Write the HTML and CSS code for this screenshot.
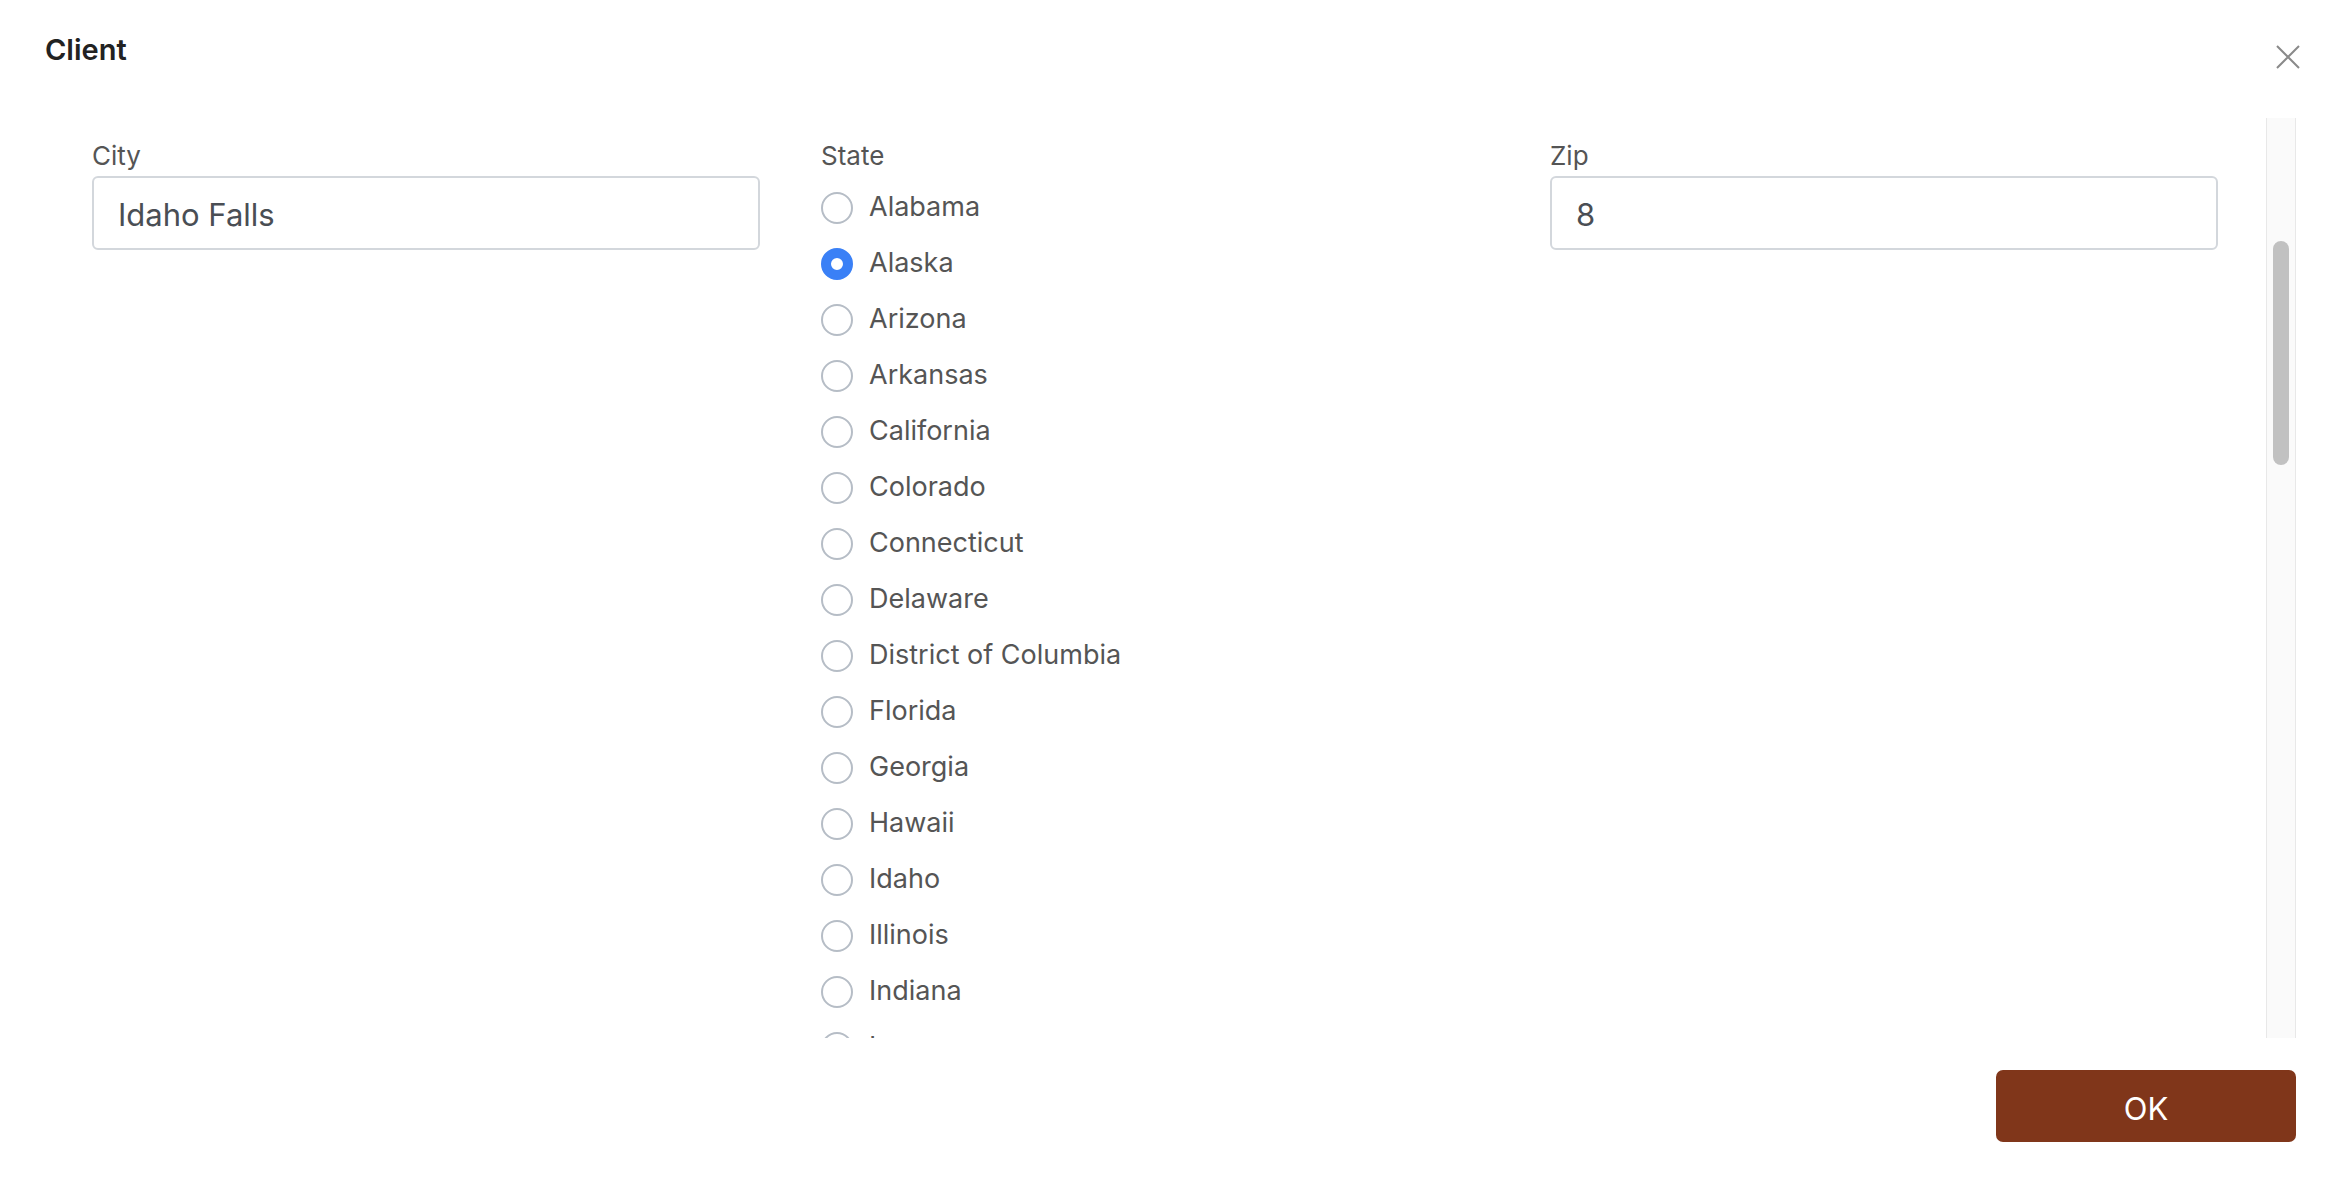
FILE: index.html
```html
<!DOCTYPE html>
<html lang="en">
<head>
<meta charset="utf-8">
<title>Client</title>
<link rel="stylesheet" href="styles.css">
</head>
<body>
<div class="dialog">
  <header class="header">
    <h1 class="title">Client</h1>
    <button class="close" aria-label="Close">
      <svg width="24" height="24" viewBox="0 0 24 24"><path d="M1 1 L23 23 M23 1 L1 23" stroke="#8a8a8a" stroke-width="2" fill="none"/></svg>
    </button>
  </header>
  <div class="body">
    <div class="scroll">
      <div class="grid">
        <div class="field">
          <label class="label">City</label>
          <div class="input">Idaho Falls</div>
        </div>
        <div class="field">
          <label class="label">State</label>
          <div class="radios">
            <div class="radio"><span class="dot"></span>Alabama</div>
            <div class="radio"><span class="dot checked"></span>Alaska</div>
            <div class="radio"><span class="dot"></span>Arizona</div>
            <div class="radio"><span class="dot"></span>Arkansas</div>
            <div class="radio"><span class="dot"></span>California</div>
            <div class="radio"><span class="dot"></span>Colorado</div>
            <div class="radio"><span class="dot"></span>Connecticut</div>
            <div class="radio"><span class="dot"></span>Delaware</div>
            <div class="radio"><span class="dot"></span>District of Columbia</div>
            <div class="radio"><span class="dot"></span>Florida</div>
            <div class="radio"><span class="dot"></span>Georgia</div>
            <div class="radio"><span class="dot"></span>Hawaii</div>
            <div class="radio"><span class="dot"></span>Idaho</div>
            <div class="radio"><span class="dot"></span>Illinois</div>
            <div class="radio"><span class="dot"></span>Indiana</div>
            <div class="radio"><span class="dot"></span>Iowa</div>
          </div>
        </div>
        <div class="field">
          <label class="label">Zip</label>
          <div class="input">8</div>
        </div>
      </div>
    </div>
    <div class="track"><div class="thumb"></div></div>
  </div>
  <footer class="footer">
    <button class="ok">OK</button>
  </footer>
</div>
</body>
</html>
```
FILE: styles.css
```css
html, body {
  margin: 0;
  padding: 0;
  background: #ffffff;
}
body {
  font-family: "Inter", "Liberation Sans", sans-serif;
  width: 2336px;
  height: 1190px;
  overflow: hidden;
}
.dialog {
  display: flex;
  flex-direction: column;
  height: 1190px;
}
.header {
  height: 118px;
  display: flex;
  justify-content: space-between;
  align-items: flex-start;
  padding: 0 36px 0 45px;
  box-sizing: border-box;
  flex: none;
}
.title {
  margin: 32px 0 0 0;
  font-size: 29px;
  line-height: 36px;
  font-weight: 600;
  color: #222222;
}
.close {
  margin-top: 45px;
  padding: 0;
  border: 0;
  background: none;
  width: 24px;
  height: 24px;
  display: block;
}
.close svg { display: block; }
.body {
  height: 920px;
  flex: none;
  display: flex;
  margin: 0 40px 0 45px;
}
.scroll {
  flex: 1;
  overflow: hidden;
  padding: 22px 49px 0 47px;
}
.grid {
  display: grid;
  grid-template-columns: 668px 668px 668px;
  column-gap: 61px;
}
.label {
  display: block;
  font-size: 26px;
  line-height: 32px;
  color: #555555;
  margin-bottom: 4px;
}
.input {
  height: 74px;
  box-sizing: border-box;
  border: 2px solid #d3d7dc;
  border-radius: 6px;
  padding: 3px 24px 0;
  display: flex;
  align-items: center;
  font-size: 31px;
  color: #4a4e54;
}
.radios {
  margin-top: 6px;
}
.radio {
  height: 56px;
  display: flex;
  align-items: center;
  font-size: 27px;
  color: #555555;
}
.dot {
  width: 32px;
  height: 32px;
  box-sizing: border-box;
  border: 2px solid #b6bdc6;
  border-radius: 50%;
  margin: 4px 16px 0 0;
  background: #ffffff;
  flex: none;
}
.dot.checked {
  border: 10px solid #3a80f6;
}
.track {
  width: 30px;
  flex: none;
  box-sizing: border-box;
  background: #fafafa;
  border-left: 1px solid #e8e8e8;
  border-right: 1px solid #e8e8e8;
}
.thumb {
  width: 16px;
  height: 224px;
  margin: 123px auto 0;
  background: #c1c1c1;
  border-radius: 8px;
}
.footer {
  flex: 1;
  display: flex;
  justify-content: flex-end;
  align-items: flex-start;
  padding: 32px 40px 0 0;
}
.ok {
  width: 300px;
  height: 72px;
  border: 0;
  border-radius: 7px;
  background: #80361a;
  color: #ffffff;
  font-family: "Inter", "Liberation Sans", sans-serif;
  font-size: 31px;
  padding: 5px 0 0;
}
```
